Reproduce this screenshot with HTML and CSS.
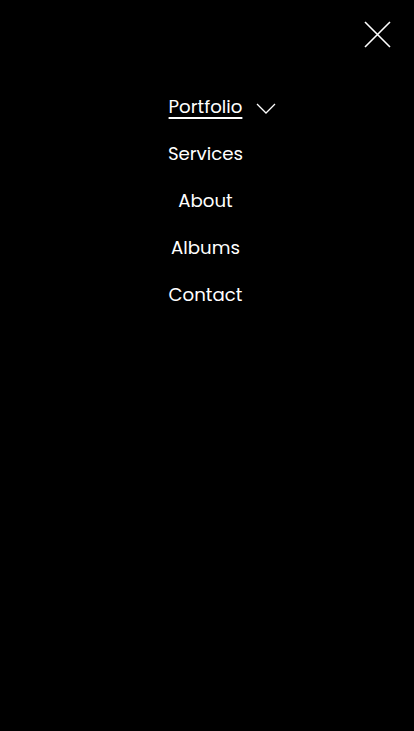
FILE: index.html
```html
<!DOCTYPE html>
<html lang="en">
<head>
<meta charset="utf-8">
<title>Menu</title>
<link rel="stylesheet" href="styles.css">
</head>
<body>
<div class="overlay">
  <header class="top">
    <button class="close" aria-label="Close menu">
      <svg width="27" height="27" viewBox="0 0 27 27" fill="none" stroke="#fff" stroke-width="1.6">
        <path d="M1 1 L26 26 M26 1 L1 26"/>
      </svg>
    </button>
  </header>
  <nav class="menu">
    <div class="item has-sub">
      <a class="link active" href="#">Portfolio</a>
      <svg class="chev" width="20" height="11" viewBox="0 0 20 11" fill="none" stroke="#fff" stroke-width="1.3">
        <path d="M1 1 L10 10 L19 1"/>
      </svg>
    </div>
    <div class="item"><a class="link" href="#">Services</a></div>
    <div class="item"><a class="link" href="#">About</a></div>
    <div class="item"><a class="link" href="#">Albums</a></div>
    <div class="item"><a class="link" href="#">Contact</a></div>
  </nav>
</div>
</body>
</html>
```
FILE: styles.css
```css
html, body {
  margin: 0;
  padding: 0;
  background: #000;
}
.overlay {
  width: 414px;
  height: 731px;
  background: #000;
  font-family: Poppins, "DejaVu Sans", sans-serif;
  color: #fff;
}
.top {
  display: flex;
  justify-content: flex-end;
  padding: 21px 23px 0 0;
  height: 48px;
  box-sizing: border-box;
}
.close {
  background: none;
  border: 0;
  padding: 0;
  width: 27px;
  height: 27px;
  cursor: pointer;
}
.close svg { display: block; }
.menu {
  display: flex;
  flex-direction: column;
  align-items: center;
  gap: 23px;
  padding-top: 47px;
  padding-right: 3px;
}
.item {
  position: relative;
  height: 24px;
  display: flex;
  align-items: center;
}
.link {
  color: #fff;
  text-decoration: none;
  font-size: 18.2px;
  line-height: 24px;
}
.link.active {
  text-decoration: underline;
  text-underline-offset: 4px;
  text-decoration-thickness: 1.5px;
}
.chev {
  position: absolute;
  left: calc(100% + 14px);
  top: 8px;
}
```
